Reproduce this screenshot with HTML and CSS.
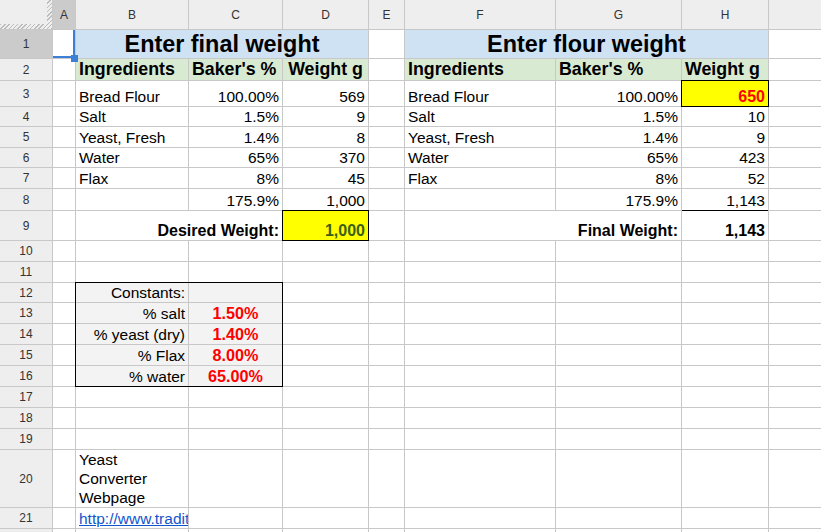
FILE: index.html
```html
<!DOCTYPE html>
<html lang="en">
<head>
    <meta charset="UTF-8">
    <meta name="viewport" content="width=device-width, initial-scale=1.0">
    <title>Baker's Percentage</title>
    <link rel="stylesheet" href="styles.css">
</head>
<body>
    <div class="sheet">
        <!-- column headers -->
        <div class="corner"></div>
        <div class="col-head selected">A</div>
        <div class="col-head">B</div>
        <div class="col-head">C</div>
        <div class="col-head">D</div>
        <div class="col-head">E</div>
        <div class="col-head">F</div>
        <div class="col-head">G</div>
        <div class="col-head">H</div>
        <div class="col-head"></div>

        <!-- 1 -->
        <div class="row-head selected">1</div>
        <div class="cell cursor"></div>
        <div class="cell title span3">Enter final weight</div>
        <div class="cell"></div>
        <div class="cell title span3">Enter flour weight</div>
        <div class="cell"></div>

        <!-- 2 -->
        <div class="row-head">2</div>
        <div class="cell"></div>
        <div class="cell head">Ingredients</div>
        <div class="cell head">Baker's %</div>
        <div class="cell head center">Weight g</div>
        <div class="cell"></div>
        <div class="cell head">Ingredients</div>
        <div class="cell head">Baker's %</div>
        <div class="cell head">Weight g</div>
        <div class="cell"></div>

        <!-- 3 -->
        <div class="row-head">3</div>
        <div class="cell"></div>
        <div class="cell">Bread Flour</div>
        <div class="cell num">100.00%</div>
        <div class="cell num">569</div>
        <div class="cell"></div>
        <div class="cell">Bread Flour</div>
        <div class="cell num">100.00%</div>
        <div class="cell num input red">650</div>
        <div class="cell"></div>

        <!-- 4 -->
        <div class="row-head">4</div>
        <div class="cell"></div>
        <div class="cell">Salt</div>
        <div class="cell num">1.5%</div>
        <div class="cell num">9</div>
        <div class="cell"></div>
        <div class="cell">Salt</div>
        <div class="cell num">1.5%</div>
        <div class="cell num">10</div>
        <div class="cell"></div>

        <!-- 5 -->
        <div class="row-head">5</div>
        <div class="cell"></div>
        <div class="cell">Yeast, Fresh</div>
        <div class="cell num">1.4%</div>
        <div class="cell num">8</div>
        <div class="cell"></div>
        <div class="cell">Yeast, Fresh</div>
        <div class="cell num">1.4%</div>
        <div class="cell num">9</div>
        <div class="cell"></div>

        <!-- 6 -->
        <div class="row-head">6</div>
        <div class="cell"></div>
        <div class="cell">Water</div>
        <div class="cell num">65%</div>
        <div class="cell num">370</div>
        <div class="cell"></div>
        <div class="cell">Water</div>
        <div class="cell num">65%</div>
        <div class="cell num">423</div>
        <div class="cell"></div>

        <!-- 7 -->
        <div class="row-head">7</div>
        <div class="cell"></div>
        <div class="cell">Flax</div>
        <div class="cell num">8%</div>
        <div class="cell num">45</div>
        <div class="cell"></div>
        <div class="cell">Flax</div>
        <div class="cell num">8%</div>
        <div class="cell num">52</div>
        <div class="cell"></div>

        <!-- 8 -->
        <div class="row-head">8</div>
        <div class="cell"></div>
        <div class="cell"></div>
        <div class="cell num">175.9%</div>
        <div class="cell num">1,000</div>
        <div class="cell"></div>
        <div class="cell"></div>
        <div class="cell num">175.9%</div>
        <div class="cell num total">1,143</div>
        <div class="cell"></div>

        <!-- 9 -->
        <div class="row-head">9</div>
        <div class="cell"></div>
        <div class="cell num bold span2">Desired Weight:</div>
        <div class="cell num input green">1,000</div>
        <div class="cell"></div>
        <div class="cell num bold span2">Final Weight:</div>
        <div class="cell num bold">1,143</div>
        <div class="cell"></div>

        <!-- 10 -->
        <div class="row-head">10</div>
        <div class="cell"></div><div class="cell"></div><div class="cell"></div><div class="cell"></div>
        <div class="cell"></div><div class="cell"></div><div class="cell"></div><div class="cell"></div><div class="cell"></div>

        <!-- 11 -->
        <div class="row-head">11</div>
        <div class="cell"></div><div class="cell"></div><div class="cell"></div><div class="cell"></div>
        <div class="cell"></div><div class="cell"></div><div class="cell"></div><div class="cell"></div><div class="cell"></div>

        <!-- 12-16: constants box sits in B:C -->
        <div class="constants">
            <div class="cell num">Constants:</div>
            <div class="cell"></div>
            <div class="cell num">% salt</div>
            <div class="cell const">1.50%</div>
            <div class="cell num">% yeast (dry)</div>
            <div class="cell const">1.40%</div>
            <div class="cell num">% Flax</div>
            <div class="cell const">8.00%</div>
            <div class="cell num">% water</div>
            <div class="cell const">65.00%</div>
        </div>

        <div class="row-head">12</div>
        <div class="cell"></div>
        <div class="cell"></div><div class="cell"></div><div class="cell"></div><div class="cell"></div><div class="cell"></div><div class="cell"></div>

        <div class="row-head">13</div>
        <div class="cell"></div>
        <div class="cell"></div><div class="cell"></div><div class="cell"></div><div class="cell"></div><div class="cell"></div><div class="cell"></div>

        <div class="row-head">14</div>
        <div class="cell"></div>
        <div class="cell"></div><div class="cell"></div><div class="cell"></div><div class="cell"></div><div class="cell"></div><div class="cell"></div>

        <div class="row-head">15</div>
        <div class="cell"></div>
        <div class="cell"></div><div class="cell"></div><div class="cell"></div><div class="cell"></div><div class="cell"></div><div class="cell"></div>

        <div class="row-head">16</div>
        <div class="cell"></div>
        <div class="cell"></div><div class="cell"></div><div class="cell"></div><div class="cell"></div><div class="cell"></div><div class="cell"></div>

        <!-- 17-19 -->
        <div class="row-head">17</div>
        <div class="cell"></div><div class="cell"></div><div class="cell"></div><div class="cell"></div>
        <div class="cell"></div><div class="cell"></div><div class="cell"></div><div class="cell"></div><div class="cell"></div>

        <div class="row-head">18</div>
        <div class="cell"></div><div class="cell"></div><div class="cell"></div><div class="cell"></div>
        <div class="cell"></div><div class="cell"></div><div class="cell"></div><div class="cell"></div><div class="cell"></div>

        <div class="row-head">19</div>
        <div class="cell"></div><div class="cell"></div><div class="cell"></div><div class="cell"></div>
        <div class="cell"></div><div class="cell"></div><div class="cell"></div><div class="cell"></div><div class="cell"></div>

        <!-- 20 -->
        <div class="row-head">20</div>
        <div class="cell"></div>
        <div class="cell wrap">Yeast Converter Webpage</div>
        <div class="cell"></div><div class="cell"></div><div class="cell"></div>
        <div class="cell"></div><div class="cell"></div><div class="cell"></div><div class="cell"></div>

        <!-- 21 -->
        <div class="row-head">21</div>
        <div class="cell"></div>
        <div class="cell"><a class="link" href="#">http://www.tradit</a></div>
        <div class="cell"></div><div class="cell"></div><div class="cell"></div>
        <div class="cell"></div><div class="cell"></div><div class="cell"></div><div class="cell"></div>

        <!-- 22 (only its top edge is in view) -->
        <div class="row-head"></div>
        <div class="cell"></div><div class="cell"></div><div class="cell"></div><div class="cell"></div>
        <div class="cell"></div><div class="cell"></div><div class="cell"></div><div class="cell"></div><div class="cell"></div>
    </div>
</body>
</html>
```

FILE: styles.css
```css
body {
    margin: 0;
    overflow: hidden;
    background-color: #fff;
    font-family: "Liberation Sans", Arial, sans-serif;
}
.sheet {
    display: grid;
    grid-template-columns: 52px 22px 112px 93px 85px 35px 150px 125px 86px minmax(0, 1fr);
    grid-template-rows: 29px 28px 21px 25px 19px 20px 19px 20px 21px 29px 20px 20px 19px 20px 20px 20px 20px 20px 20px 20px 57px 20px minmax(0, 1fr);
    gap: 1px;
    height: 100vh;
    background-color: #c8c8c8;
}
.corner {
    background:
        repeating-linear-gradient(-45deg, #bcbcbc 0 1px, transparent 1px 3px) right top / 5px 100% no-repeat,
        repeating-linear-gradient(-45deg, #bcbcbc 0 1px, transparent 1px 3px) left bottom / 100% 5px no-repeat,
        #eeeeee;
}
.col-head,
.row-head {
    display: flex;
    align-items: center;
    justify-content: center;
    background-color: #eeeeee;
    color: #333;
    font-size: 12px;
}
.col-head.selected,
.row-head.selected {
    background-color: #cbcbcb;
}
.cell {
    display: flex;
    align-items: flex-end;
    padding: 0 3px;
    overflow: hidden;
    white-space: nowrap;
    background-color: #fff;
    color: #000;
    font-size: 15.5px;
}
.cell.num {
    justify-content: flex-end;
}
.cell.center {
    justify-content: center;
}
.cell.bold {
    font-weight: bold;
    font-size: 16px;
}
.span2 {
    grid-column: span 2;
}
.span3 {
    grid-column: span 3;
}
.cell.title {
    justify-content: center;
    background-color: #cfe2f3;
    font-size: 23.4px;
    font-weight: bold;
}
.cell.head {
    background-color: #d9ead3;
    font-size: 17.8px;
    font-weight: bold;
}
.cell.input {
    background-color: #ffff00;
    outline: 1px solid #000;
    font-weight: bold;
    font-size: 16px;
}
.cell.red {
    color: #ff0000;
}
.cell.green {
    color: #3a5e1a;
}
.cell.total {
    box-shadow: 0 1px 0 #000;
}
.cell.cursor {
    position: relative;
    overflow: visible;
    box-shadow: inset -2px -2px 0 #3c7fd6;
}
.cell.cursor::after {
    content: "";
    position: absolute;
    right: -3px;
    bottom: -4px;
    width: 7px;
    height: 7px;
    background-color: #3c7fd6;
    z-index: 1;
}
.constants {
    grid-column: 3 / span 2;
    grid-row: 13 / span 5;
    display: grid;
    grid-template-columns: 112px 93px;
    grid-template-rows: 19px 20px 20px 20px 20px;
    gap: 1px;
    background-color: #c8c8c8;
    outline: 1px solid #000;
}
.constants .cell {
    background-color: #f3f3f3;
}
.constants .const {
    justify-content: center;
    color: #ff0000;
    font-weight: bold;
    font-size: 16.2px;
}
.cell.wrap {
    display: block;
    white-space: normal;
    line-height: 19px;
}
.link {
    color: #1155cc;
    text-decoration: underline;
}
```
